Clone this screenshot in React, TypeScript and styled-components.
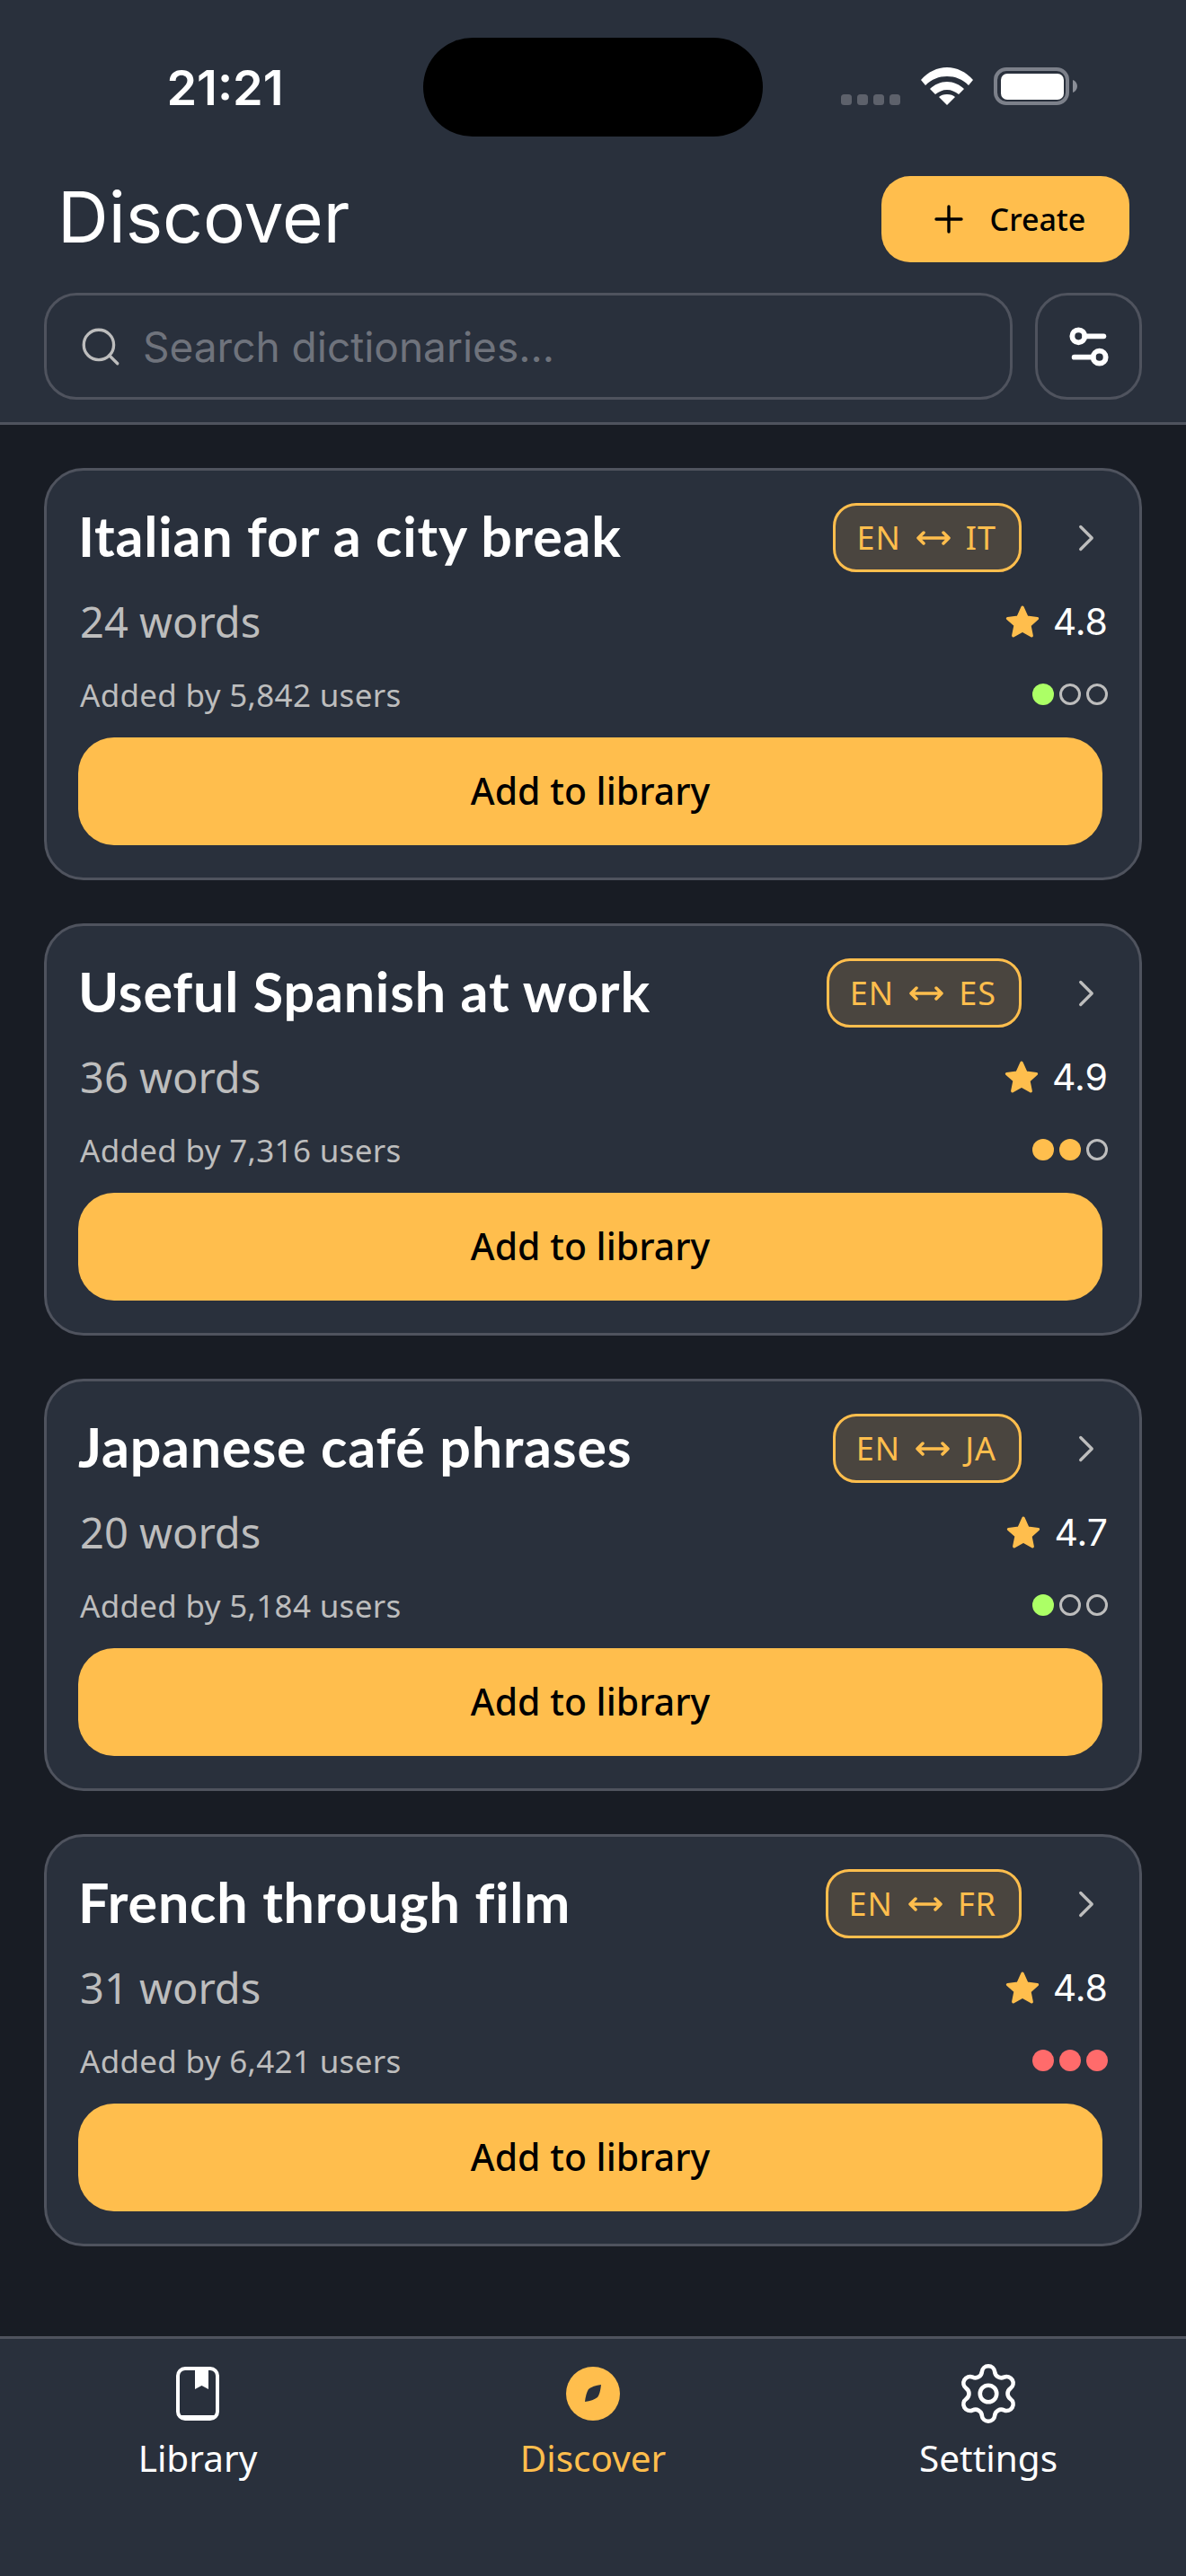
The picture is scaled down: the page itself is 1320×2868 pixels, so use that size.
import { ChevronRight, Plus, Search, Settings, Settings2 } from "lucide-react";
import styled, { createGlobalStyle } from "styled-components";

const GlobalStyle = createGlobalStyle`
  html, body {
    margin: 0;
    padding: 0;
    background: #181c24;
  }
`;

const amber = "#ffbe4d";
const panel = "#29303c";
const line = "#4f535e";

const Page = styled.div`
  width: 1320px;
  height: 2868px;
  display: flex;
  flex-direction: column;
  background: #181c24;
  font-family: "Noto Sans", sans-serif;
  color: #fff;
`;

const Header = styled.header`
  height: 473px;
  box-sizing: border-box;
  background: ${panel};
  border-bottom: 3px solid ${line};
`;

const StatusBar = styled.div`
  height: 196px;
  box-sizing: border-box;
  padding-top: 42px;
  display: flex;
  align-items: flex-start;
  font-family: Inter, sans-serif;
`;

const Time = styled.div`
  width: 501px;
  height: 110px;
  margin-right: -30px;
  display: flex;
  align-items: center;
  justify-content: center;
  font-size: 54px;
  font-weight: 600;
`;

const Island = styled.div`
  width: 378px;
  height: 110px;
  border-radius: 55px;
  background: #000;
`;

const StatusIcons = styled.div`
  height: 42px;
  margin: 33px 0 0 87px;
  display: flex;
  align-items: flex-end;
  gap: 23px;
`;

const TitleRow = styled.div`
  height: 96px;
  padding: 0 63px 0 64px;
  display: flex;
  align-items: center;
  justify-content: space-between;
`;

const Title = styled.h1`
  margin: -6px 0 0;
  font-family: Inter, sans-serif;
  font-size: 78.500px;
  font-weight: 400;
`;

const CreateButton = styled.button`
  width: 276px;
  height: 96px;
  padding: 0 0 0 2px;
  border: 0;
  border-radius: 32px;
  background: ${amber};
  color: #000;
  display: flex;
  align-items: center;
  justify-content: center;
  gap: 22px;
  font-family: "Noto Sans", sans-serif;
  font-size: 34px;
  font-weight: 500;
`;

const SearchRow = styled.div`
  margin-top: 34px;
  padding: 0 49px;
  display: flex;
  gap: 25px;
`;

const SearchBox = styled.div`
  flex: 1;
  height: 119px;
  box-sizing: border-box;
  padding-left: 35px;
  border: 3px solid ${line};
  border-radius: 36px;
  display: flex;
  align-items: center;
  gap: 22px;
  color: #bdbdbd;
`;

const Placeholder = styled.span`
  font-family: Inter, sans-serif;
  font-size: 46px;
  color: #6f737c;
`;

const FilterButton = styled.button`
  width: 119px;
  height: 119px;
  padding: 0;
  background: transparent;
  border: 3px solid ${line};
  border-radius: 36px;
  color: #fff;
  display: flex;
  align-items: center;
  justify-content: center;
`;

const List = styled.main`
  flex: 1;
  padding: 48px 49px 0;
  display: flex;
  flex-direction: column;
  gap: 48px;
`;

const Card = styled.article`
  height: 459px;
  box-sizing: border-box;
  padding: 36px 41px 0 35px;
  background: ${panel};
  border: 3px solid ${line};
  border-radius: 44px;
`;

const CardTop = styled.div`
  height: 77px;
  display: flex;
  align-items: center;
`;

const CardTitle = styled.h2`
  flex: 1;
  margin: -4px 0 0;
  font-family: Lato, sans-serif;
  font-size: 61px;
  font-weight: 700;
  letter-spacing: 0.8px;
`;

const LangBadge = styled.div`
  height: 77px;
  box-sizing: border-box;
  padding: 0 25px 0 23px;
  background: #4a453f;
  border: 3px solid ${amber};
  border-radius: 26px;
  display: flex;
  align-items: center;
  gap: 16px;
  color: ${amber};
  font-size: 36px;
  letter-spacing: 1px;
`;

const Chevron = styled.div`
  width: 97px;
  height: 50px;
  margin-right: -7px;
  display: flex;
  justify-content: flex-end;
  color: #bdbdbd;
`;

const MetaRow = styled.div<{ $top: number; $height: number }>`
  height: ${(p) => p.$height}px;
  margin-top: ${(p) => p.$top}px;
  padding-left: 2px;
  display: flex;
  align-items: center;
  justify-content: space-between;
`;

const Words = styled.span`
  font-size: 47px;
  color: #bdbdbd;
`;

const Added = styled.span`
  font-size: 35px;
  letter-spacing: 0.3px;
  color: #bdbdbd;
`;

const Rating = styled.span`
  display: flex;
  align-items: center;
  gap: 14px;
  margin-right: -6px;
  font-family: Inter, sans-serif;
  font-size: 41px;
`;

const Dots = styled.div`
  display: flex;
  gap: 6px;
  margin-right: -6px;
`;

const Dot = styled.span<{ $color?: string }>`
  width: 24px;
  height: 24px;
  box-sizing: border-box;
  border-radius: 50%;
  background: ${(p) => p.$color || "transparent"};
  border: ${(p) => (p.$color ? "0" : "3px solid #bdbdbd")};
`;

const AddButton = styled.button`
  width: 100%;
  height: 120px;
  margin-top: 24px;
  padding: 0 0 3px;
  border: 0;
  border-radius: 40px;
  background: ${amber};
  color: #000;
  font-family: "Noto Sans", sans-serif;
  font-size: 41px;
  font-weight: 500;
`;

const TabBar = styled.nav`
  height: 267px;
  box-sizing: border-box;
  padding-top: 25px;
  background: ${panel};
  border-top: 3px solid ${line};
  display: grid;
  grid-template-columns: repeat(3, 1fr);
`;

const Tab = styled.div<{ $active?: boolean }>`
  display: flex;
  flex-direction: column;
  align-items: center;
  gap: 8px;
  font-size: 40.5px;
  color: ${(p) => (p.$active ? amber : "#fff")};
`;

const TabIcon = styled.div`
  height: 72px;
  display: flex;
  align-items: center;
  justify-content: center;
`;

const StarIcon = () => (
  <svg width="40" height="38" viewBox="0 0 24 23">
    <path
      fill={amber}
      stroke={amber}
      strokeWidth="2"
      strokeLinejoin="round"
      d="M12 2l3 6.6 7 .8-5.2 4.7 1.4 7L12 17.6 5.8 21l1.4-7L2 9.4l7-.8z"
    />
  </svg>
);

const SwapArrow = () => (
  <svg width="40" height="16" viewBox="0 0 40 16" fill="none" stroke={amber} strokeWidth="3.5" strokeLinecap="round" strokeLinejoin="round">
    <path d="M3 8h34M9 2 3 8l6 6M31 2l6 6-6 6" />
  </svg>
);

const BookIcon = () => (
  <svg width="48" height="60" viewBox="0 0 48 60">
    <rect x="2" y="2" width="44" height="56" rx="8" fill="none" stroke="#fff" strokeWidth="4" />
    <path fill="#fff" d="M21 2h15v23l-7.500-4-7.500 4z" />
    <path fill="#fff" d="M4 54h40v3H4z" />
  </svg>
);

const CompassIcon = () => (
  <svg width="60" height="60" viewBox="0 0 60 60">
    <circle cx="30" cy="30" r="30" fill={amber} />
    <path fill={panel} d="M39 20Q38 30 35 34 30 38 21 39 22 30 25 25 30 21 39 20z" />
  </svg>
);

const WifiIcon = () => (
  <svg width="58" height="42" viewBox="0 0 58 42" fill="#fff">
    <path d="M0 14C8 5 18 0 29 0s21 5 29 14l-5 6C46 13 38 10 29 10s-17 3-24 10z" />
    <path d="M10 24c5-5 12-8 19-8s14 3 19 8l-6 6c-4-3-8-5-13-5s-9 2-13 5z" />
    <path d="M20 33c2-2 5-3 9-3s7 1 9 3l-9 9z" />
  </svg>
);

const BatteryIcon = () => (
  <svg width="93" height="42" viewBox="0 0 93 42">
    <rect x="2" y="2" width="80" height="38" rx="12" fill="none" stroke="#7c808a" strokeWidth="4" />
    <rect x="8" y="7" width="70" height="29" rx="7" fill="#fff" />
    <path fill="#8a8e97" d="M88 14c3 1 5 4 5 7s-2 6-5 7z" />
  </svg>
);

const SignalDots = () => (
  <svg width="66" height="12" viewBox="0 0 66 12" fill="#5d616b">
    <rect x="0" width="12" height="12" rx="3.500" />
    <rect x="18" width="12" height="12" rx="3.500" />
    <rect x="36" width="12" height="12" rx="3.500" />
    <rect x="54" width="12" height="12" rx="3.500" />
  </svg>
);

const green = "#acff66";
const red = "#ff6b6b";

const dictionaries = [
  { title: "Italian for a city break", code: "IT", words: 24, rating: "4.8", users: "5,842", dots: [green] },
  { title: "Useful Spanish at work", code: "ES", words: 36, rating: "4.9", users: "7,316", dots: [amber, amber] },
  { title: "Japanese café phrases", code: "JA", words: 20, rating: "4.7", users: "5,184", dots: [green] },
  { title: "French through film", code: "FR", words: 31, rating: "4.8", users: "6,421", dots: [red, red, red] },
];

const App = () => {
  return (
    <Page>
      <GlobalStyle />
      <Header>
        <StatusBar>
          <Time>21:21</Time>
          <Island />
          <StatusIcons>
            <SignalDots />
            <WifiIcon />
            <BatteryIcon />
          </StatusIcons>
        </StatusBar>
        <TitleRow>
          <Title>Discover</Title>
          <CreateButton>
            <Plus size={48} strokeWidth={1.7} />
            Create
          </CreateButton>
        </TitleRow>
        <SearchRow>
          <SearchBox>
            <Search size={50} strokeWidth={1.6} />
            <Placeholder>Search dictionaries...</Placeholder>
          </SearchBox>
          <FilterButton>
            <Settings2 size={56} strokeWidth={2.5} />
          </FilterButton>
        </SearchRow>
      </Header>
      <List>
        {dictionaries.map((d) => (
          <Card key={d.title}>
            <CardTop>
              <CardTitle>{d.title}</CardTitle>
              <LangBadge>
                EN <SwapArrow /> {d.code}
              </LangBadge>
              <Chevron>
                <ChevronRight size={50} strokeWidth={1.6} />
              </Chevron>
            </CardTop>
            <MetaRow $top={31} $height={48}>
              <Words>{d.words} words</Words>
              <Rating>
                <StarIcon />
                {d.rating}
              </Rating>
            </MetaRow>
            <MetaRow $top={33} $height={48}>
              <Added>Added by {d.users} users</Added>
              <Dots>
                {[0, 1, 2].map((i) => (
                  <Dot key={i} $color={d.dots[i]} />
                ))}
              </Dots>
            </MetaRow>
            <AddButton>Add to library</AddButton>
          </Card>
        ))}
      </List>
      <TabBar>
        <Tab>
          <TabIcon>
            <BookIcon />
          </TabIcon>
          Library
        </Tab>
        <Tab $active>
          <TabIcon>
            <CompassIcon />
          </TabIcon>
          Discover
        </Tab>
        <Tab>
          <TabIcon>
            <Settings size={74} strokeWidth={1.5} />
          </TabIcon>
          Settings
        </Tab>
      </TabBar>
    </Page>
  );
};

export default App;
